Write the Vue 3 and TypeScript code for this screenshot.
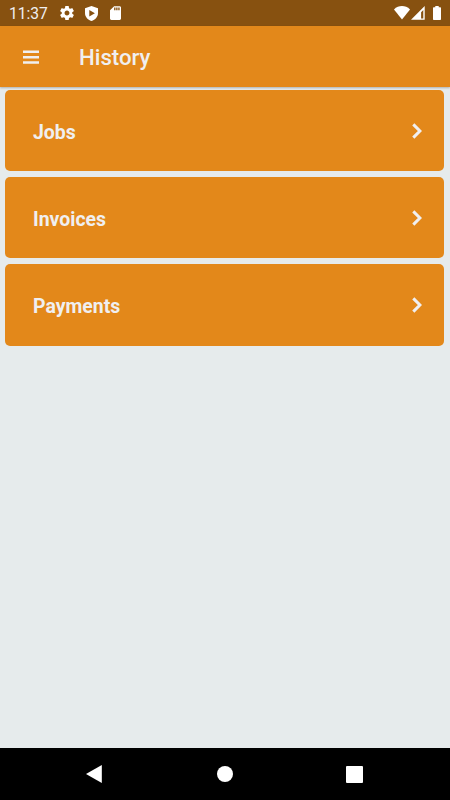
<script setup lang="ts">
interface HistorySection {
  id: string
  label: string
}

const sections: HistorySection[] = [
  { id: 'jobs', label: 'Jobs' },
  { id: 'invoices', label: 'Invoices' },
  { id: 'payments', label: 'Payments' },
]
</script>

<template>
  <div class="screen">
    <div class="status-bar">
      <span class="clock">11:37</span>
      <div class="notifications">
        <svg class="gear" viewBox="2 2 20 20">
          <path d="M19.43 12.98c.04-.32.07-.64.07-.98s-.03-.66-.07-.98l2.11-1.65c.19-.15.24-.42.12-.64l-2-3.46c-.12-.22-.39-.3-.61-.22l-2.49 1c-.52-.4-1.08-.73-1.69-.98l-.38-2.65C14.46 2.18 14.25 2 14 2h-4c-.25 0-.46.18-.49.42l-.38 2.65c-.61.25-1.17.59-1.69.98l-2.49-1c-.23-.09-.49 0-.61.22l-2 3.46c-.13.22-.07.49.12.64l2.11 1.65c-.04.32-.07.65-.07.98s.03.66.07.98l-2.11 1.65c-.19.15-.24.42-.12.64l2 3.46c.12.22.39.3.61.22l2.49-1c.52.4 1.08.73 1.69.98l.38 2.65c.03.24.24.42.49.42h4c.25 0 .46-.18.49-.42l.38-2.65c.61-.25 1.17-.59 1.69-.98l2.49 1c.23.09.49 0 .61-.22l2-3.46c.12-.22.07-.49-.12-.64zM12 15.5c-1.93 0-3.5-1.57-3.5-3.5s1.57-3.5 3.5-3.5 3.5 1.57 3.5 3.5-1.57 3.5-3.5 3.5z" />
        </svg>
        <svg class="shield" viewBox="0 0 13 15">
          <path fill-rule="evenodd" d="M6.5 0 13 2.3V7c0 3.800-2.700 6.700-6.500 8C2.700 13.700 0 10.800 0 7V2.300ZM4.300 4.100v6.400L9.900 7.300Z" />
        </svg>
        <svg class="sd-card" viewBox="4 2 16 20">
          <path d="M18 2h-8L4.020 8 4 20c0 1.100.9 2 2 2h12c1.100 0 2-.9 2-2V4c0-1.100-.9-2-2-2zm-6 6h-2V4h2v4zm3 0h-2V4h2v4zm3 0h-2V4h2v4z" />
        </svg>
      </div>
      <div class="system">
        <svg class="wifi" viewBox="0 0 16 14">
          <path d="M0 3.400C4.600-1 11.400-1 16 3.400L8 13.500Z" />
        </svg>
        <svg class="signal" viewBox="0 0 14 14">
          <path fill-rule="evenodd" d="M13.700 0v13.700H0ZM12.300 4 10.100 6.200v6.200h2.200Z" />
        </svg>
        <svg class="battery" viewBox="0 0 8 14">
          <path d="M2.300 0h3.400v1.300H7c.6 0 1 .4 1 1V13c0 .6-.4 1-1 1H1c-.6 0-1-.4-1-1V2.300c0-.6.4-1 1-1h1.300Z" />
        </svg>
      </div>
    </div>

    <header class="app-bar">
      <button class="menu" type="button" aria-label="Menu">
        <svg viewBox="0 0 16 14"><path d="M0 .4h16V3H0ZM0 5.900h16v2.600H0ZM0 11.200h16v2.600H0Z" /></svg>
      </button>
      <h1>History</h1>
    </header>

    <main class="list">
      <button v-for="section in sections" :key="section.id" class="card" type="button">
        <span>{{ section.label }}</span>
        <svg viewBox="0 0 10 16"><path d="M1.300 1.400 7.900 8 1.300 14.600" /></svg>
      </button>
    </main>

    <nav class="nav-bar">
      <svg class="back" viewBox="0 0 16 18"><path d="M15.800 0v18L0 9Z" /></svg>
      <svg class="home" viewBox="0 0 16 16"><circle cx="8" cy="8" r="8" /></svg>
      <svg class="recent" viewBox="0 0 17 17"><rect width="17" height="17" rx="1" /></svg>
    </nav>
  </div>
</template>

<style>
body {
  margin: 0;
}
</style>

<style scoped>
.screen {
  display: flex;
  flex-direction: column;
  width: 100%;
  height: 100vh;
  overflow: hidden;
  background: #e6ebec;
  color: #f0eff0;
  font-family: Roboto, "Liberation Sans", sans-serif;
}

svg {
  display: block;
  flex: none;
  fill: #fff;
}

button {
  border: 0;
  color: inherit;
  font: inherit;
}

.status-bar {
  display: flex;
  align-items: center;
  flex: none;
  box-sizing: border-box;
  height: 26px;
  padding: 0 9px;
  background: #875110;
}

.clock {
  width: 51px;
  padding-top: 2px;
  font-size: 15.600px;
  line-height: 20px;
}

.notifications,
.system {
  display: flex;
  align-items: center;
}

.gear {
  width: 14px;
  height: 14px;
}

.shield {
  width: 13px;
  height: 15px;
  margin-left: 11px;
}

.sd-card {
  width: 11px;
  height: 14px;
  margin-left: 12px;
}

.system {
  margin-left: auto;
}

.wifi {
  width: 16px;
  height: 14px;
}

.signal {
  width: 14px;
  height: 14px;
  margin-left: 1px;
}

.battery {
  width: 8px;
  height: 14px;
  margin-left: 8px;
}

.app-bar {
  display: flex;
  align-items: center;
  flex: none;
  box-sizing: border-box;
  height: 61px;
  padding: 2px 23px 0;
  background: #e3881a;
  box-shadow: 0 1px 2px rgba(0, 0, 0, 0.25);
}

.menu {
  padding: 0 0 1px;
  background: none;
}

.menu svg {
  width: 16px;
  height: 14px;
  fill: #f0eff0;
}

.app-bar h1 {
  margin: 0 0 0 40px;
  padding-bottom: 2px;
  font-size: 22.200px;
  font-weight: 500;
  line-height: 28px;
}

.list {
  display: flex;
  flex: 1;
  flex-direction: column;
  gap: 5.700px;
  padding: 3px 6px 3px 5px;
}

.card {
  display: flex;
  align-items: center;
  justify-content: space-between;
  flex: none;
  box-sizing: border-box;
  height: 81.400px;
  padding: 2px 22px 0 28px;
  border-radius: 5px;
  background: #e3881a;
  font-size: 19.450px;
  font-weight: 700;
}

.card span {
  padding-top: 1px;
}

.card svg {
  width: 10px;
  height: 16px;
  margin-bottom: 2px;
  fill: none;
  stroke: #f0eff0;
  stroke-width: 3;
}

.nav-bar {
  display: flex;
  align-items: center;
  justify-content: space-between;
  flex: none;
  box-sizing: border-box;
  height: 52px;
  padding: 0 87px 0 86px;
  background: #000;
}

.back {
  width: 16px;
  height: 18px;
}

.home {
  width: 16px;
  height: 16px;
  margin-left: 1px;
}

.recent {
  width: 17px;
  height: 17px;
}
</style>
